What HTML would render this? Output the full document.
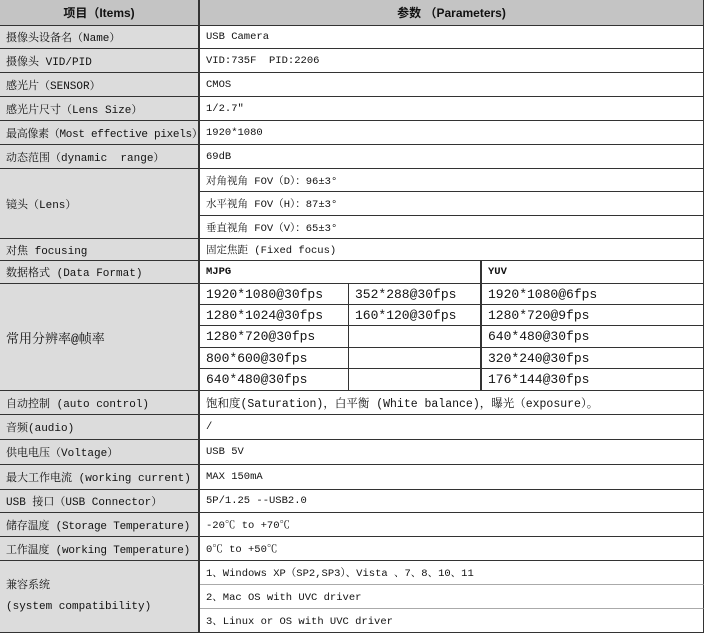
<!DOCTYPE html>
<html><head><meta charset="utf-8"><style>
body{margin:0;width:705px;height:634px;background:#fff;overflow:hidden}
#t{position:relative;width:705px;height:634px;font-family:"Liberation Mono","Noto Serif CJK SC",monospace;font-size:10.5px;color:#111}
.c{position:absolute;box-sizing:border-box;border-right:1px solid #333;border-bottom:1px solid #333;display:flex;align-items:center;padding-left:6px;white-space:nowrap;overflow:hidden}
.l{background:#dcdcdc;border-right:2px solid #333;font-size:11px}
.h{background:#c4c4c4;font-family:"Liberation Sans","Noto Sans CJK SC",sans-serif;font-weight:bold;font-size:12px;justify-content:center;padding:0}
.r{font-size:13px;font-family:"Liberation Mono","Noto Serif CJK SC",monospace}
.b{font-weight:bold}
</style></head><body><div id="t">
<div style="position:absolute;left:0;top:0;width:703px;height:632px;border-left:1px solid #333;border-top:1px solid #333;box-sizing:border-box;pointer-events:none"></div>
<div class="c h" style="left:0;top:0;width:200px;height:26px;border-right:2px solid #333">项目（Items)</div>
<div class="c h" style="left:200px;top:0;width:504px;height:26px">参数 （Parameters)</div>

<div class="c l" style="left:0;top:26px;width:200px;height:23px">摄像头设备名（Name）</div>
<div class="c" style="left:200px;top:26px;width:504px;height:23px">USB Camera</div>
<div class="c l" style="left:0;top:49px;width:200px;height:24px">摄像头 VID/PID</div>
<div class="c" style="left:200px;top:49px;width:504px;height:24px">VID:735F&nbsp; PID:2206</div>
<div class="c l" style="left:0;top:73px;width:200px;height:24px">感光片（SENSOR）</div>
<div class="c" style="left:200px;top:73px;width:504px;height:24px">CMOS</div>
<div class="c l" style="left:0;top:97px;width:200px;height:24px">感光片尺寸（Lens Size）</div>
<div class="c" style="left:200px;top:97px;width:504px;height:24px">1/2.7"</div>
<div class="c l" style="left:0;top:121px;width:200px;height:24px;letter-spacing:-0.3px">最高像素（Most effective pixels）</div>
<div class="c" style="left:200px;top:121px;width:504px;height:24px">1920*1080</div>
<div class="c l" style="left:0;top:145px;width:200px;height:24px">动态范围（dynamic&nbsp; range）</div>
<div class="c" style="left:200px;top:145px;width:504px;height:24px">69dB</div>

<div class="c l" style="left:0;top:169px;width:200px;height:70px">镜头（Lens）</div>
<div class="c" style="left:200px;top:169px;width:504px;height:23px">对角视角 FOV（D）：96±3°</div>
<div class="c" style="left:200px;top:192px;width:504px;height:24px">水平视角 FOV（H）：87±3°</div>
<div class="c" style="left:200px;top:216px;width:504px;height:23px">垂直视角 FOV（V）：65±3°</div>

<div class="c l" style="left:0;top:239px;width:200px;height:22px">对焦 focusing</div>
<div class="c" style="left:200px;top:239px;width:504px;height:22px">固定焦距 (Fixed focus)</div>
<div class="c l" style="left:0;top:261px;width:200px;height:23px">数据格式 (Data Format)</div>
<div class="c b" style="left:200px;top:261px;width:282px;height:23px;border-right:2px solid #333">MJPG</div>
<div class="c b" style="left:482px;top:261px;width:222px;height:23px">YUV</div>

<div class="c l" style="left:0;top:284px;width:200px;height:107px;font-size:13px">常用分辨率@帧率</div>
<div class="c r" style="left:200px;top:284px;width:149px;height:21px">1920*1080@30fps</div>
<div class="c r" style="left:349px;top:284px;width:133px;height:21px;border-right:2px solid #333">352*288@30fps</div>
<div class="c r" style="left:482px;top:284px;width:222px;height:21px">1920*1080@6fps</div>
<div class="c r" style="left:200px;top:305px;width:149px;height:21px">1280*1024@30fps</div>
<div class="c r" style="left:349px;top:305px;width:133px;height:21px;border-right:2px solid #333">160*120@30fps</div>
<div class="c r" style="left:482px;top:305px;width:222px;height:21px">1280*720@9fps</div>
<div class="c r" style="left:200px;top:326px;width:149px;height:22px">1280*720@30fps</div>
<div class="c r" style="left:349px;top:326px;width:133px;height:22px;border-right:2px solid #333"></div>
<div class="c r" style="left:482px;top:326px;width:222px;height:22px">640*480@30fps</div>
<div class="c r" style="left:200px;top:348px;width:149px;height:21px">800*600@30fps</div>
<div class="c r" style="left:349px;top:348px;width:133px;height:21px;border-right:2px solid #333"></div>
<div class="c r" style="left:482px;top:348px;width:222px;height:21px">320*240@30fps</div>
<div class="c r" style="left:200px;top:369px;width:149px;height:22px">640*480@30fps</div>
<div class="c r" style="left:349px;top:369px;width:133px;height:22px;border-right:2px solid #333"></div>
<div class="c r" style="left:482px;top:369px;width:222px;height:22px">176*144@30fps</div>

<div class="c l" style="left:0;top:391px;width:200px;height:24px">自动控制 (auto control)</div>
<div class="c" style="left:200px;top:391px;width:504px;height:24px;font-size:11.5px">饱和度(Saturation)，白平衡 (White balance)，曝光（exposure）。</div>
<div class="c l" style="left:0;top:415px;width:200px;height:25px">音频(audio)</div>
<div class="c" style="left:200px;top:415px;width:504px;height:25px">/</div>
<div class="c l" style="left:0;top:440px;width:200px;height:25px">供电电压（Voltage）</div>
<div class="c" style="left:200px;top:440px;width:504px;height:25px">USB 5V</div>
<div class="c l" style="left:0;top:465px;width:200px;height:25px">最大工作电流 (working current)</div>
<div class="c" style="left:200px;top:465px;width:504px;height:25px">MAX 150mA</div>
<div class="c l" style="left:0;top:490px;width:200px;height:23px">USB 接口（USB Connector）</div>
<div class="c" style="left:200px;top:490px;width:504px;height:23px">5P/1.25 --USB2.0</div>
<div class="c l" style="left:0;top:513px;width:200px;height:24px;letter-spacing:-0.2px">储存温度 (Storage Temperature)</div>
<div class="c" style="left:200px;top:513px;width:504px;height:24px">-20℃ to +70℃</div>
<div class="c l" style="left:0;top:537px;width:200px;height:24px;letter-spacing:-0.2px">工作温度 (working Temperature)</div>
<div class="c" style="left:200px;top:537px;width:504px;height:24px">0℃ to +50℃</div>

<div class="c l" style="left:0;top:561px;width:200px;height:72px;flex-direction:column;align-items:flex-start;justify-content:center;line-height:21px">
<div>兼容系统</div><div>(system compatibility)</div></div>
<div class="c" style="left:200px;top:561px;width:504px;height:24px;border-bottom:1px solid #aaa">1、Windows XP（SP2,SP3）、Vista 、7、8、10、11</div>
<div class="c" style="left:200px;top:585px;width:504px;height:24px;border-bottom:1px solid #aaa">2、Mac OS with UVC driver</div>
<div class="c" style="left:200px;top:609px;width:504px;height:24px">3、Linux or OS with UVC driver</div>
</div></body></html>
